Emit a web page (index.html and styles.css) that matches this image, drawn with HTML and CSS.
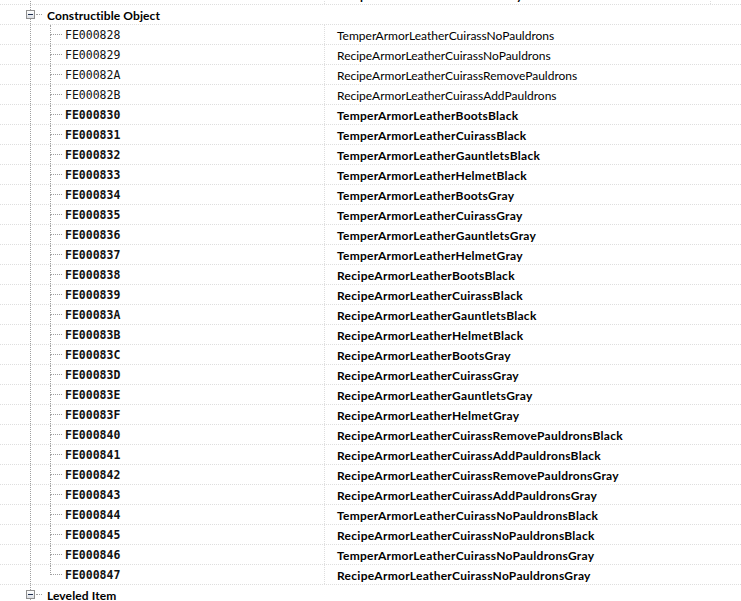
FILE: index.html
```html
<!DOCTYPE html>
<html lang="en">
<head>
    <meta charset="UTF-8">
    <meta name="viewport" content="width=device-width, initial-scale=1.0">
    <title>Records</title>
    <link rel="stylesheet" href="styles.css">
</head>
<body>

<div class="tree-view">

    <div class="row top">
        <div class="tree"><span class="guide"></span></div>
        <div class="edid wide bold">TemperArmorLeatherHelmetGray</div>
        <div class="extra"></div>
    </div>

    <div class="row group">
        <div class="node">
            <span class="expander"><i class="stem"></i><b class="box"></b><i class="stem"></i></span>
            <span class="hook"></span>
            <span class="label">Constructible Object</span>
        </div>
    </div>

    <div class="row">
        <div class="tree"><span class="guide"></span><span class="branch"><i class="up"></i><i class="down"></i></span><span class="formid">FE000828</span></div>
        <div class="edid">TemperArmorLeatherCuirassNoPauldrons</div>
    </div>
    <div class="row">
        <div class="tree"><span class="guide"></span><span class="branch"><i class="up"></i><i class="down"></i></span><span class="formid">FE000829</span></div>
        <div class="edid">RecipeArmorLeatherCuirassNoPauldrons</div>
    </div>
    <div class="row">
        <div class="tree"><span class="guide"></span><span class="branch"><i class="up"></i><i class="down"></i></span><span class="formid">FE00082A</span></div>
        <div class="edid">RecipeArmorLeatherCuirassRemovePauldrons</div>
    </div>
    <div class="row">
        <div class="tree"><span class="guide"></span><span class="branch"><i class="up"></i><i class="down"></i></span><span class="formid">FE00082B</span></div>
        <div class="edid">RecipeArmorLeatherCuirassAddPauldrons</div>
    </div>
    <div class="row bold">
        <div class="tree"><span class="guide"></span><span class="branch"><i class="up"></i><i class="down"></i></span><span class="formid">FE000830</span></div>
        <div class="edid">TemperArmorLeatherBootsBlack</div>
    </div>
    <div class="row bold">
        <div class="tree"><span class="guide"></span><span class="branch"><i class="up"></i><i class="down"></i></span><span class="formid">FE000831</span></div>
        <div class="edid">TemperArmorLeatherCuirassBlack</div>
    </div>
    <div class="row bold">
        <div class="tree"><span class="guide"></span><span class="branch"><i class="up"></i><i class="down"></i></span><span class="formid">FE000832</span></div>
        <div class="edid">TemperArmorLeatherGauntletsBlack</div>
    </div>
    <div class="row bold">
        <div class="tree"><span class="guide"></span><span class="branch"><i class="up"></i><i class="down"></i></span><span class="formid">FE000833</span></div>
        <div class="edid">TemperArmorLeatherHelmetBlack</div>
    </div>
    <div class="row bold">
        <div class="tree"><span class="guide"></span><span class="branch"><i class="up"></i><i class="down"></i></span><span class="formid">FE000834</span></div>
        <div class="edid">TemperArmorLeatherBootsGray</div>
    </div>
    <div class="row bold">
        <div class="tree"><span class="guide"></span><span class="branch"><i class="up"></i><i class="down"></i></span><span class="formid">FE000835</span></div>
        <div class="edid">TemperArmorLeatherCuirassGray</div>
    </div>
    <div class="row bold">
        <div class="tree"><span class="guide"></span><span class="branch"><i class="up"></i><i class="down"></i></span><span class="formid">FE000836</span></div>
        <div class="edid">TemperArmorLeatherGauntletsGray</div>
    </div>
    <div class="row bold">
        <div class="tree"><span class="guide"></span><span class="branch"><i class="up"></i><i class="down"></i></span><span class="formid">FE000837</span></div>
        <div class="edid">TemperArmorLeatherHelmetGray</div>
    </div>
    <div class="row bold">
        <div class="tree"><span class="guide"></span><span class="branch"><i class="up"></i><i class="down"></i></span><span class="formid">FE000838</span></div>
        <div class="edid">RecipeArmorLeatherBootsBlack</div>
    </div>
    <div class="row bold">
        <div class="tree"><span class="guide"></span><span class="branch"><i class="up"></i><i class="down"></i></span><span class="formid">FE000839</span></div>
        <div class="edid">RecipeArmorLeatherCuirassBlack</div>
    </div>
    <div class="row bold">
        <div class="tree"><span class="guide"></span><span class="branch"><i class="up"></i><i class="down"></i></span><span class="formid">FE00083A</span></div>
        <div class="edid">RecipeArmorLeatherGauntletsBlack</div>
    </div>
    <div class="row bold">
        <div class="tree"><span class="guide"></span><span class="branch"><i class="up"></i><i class="down"></i></span><span class="formid">FE00083B</span></div>
        <div class="edid">RecipeArmorLeatherHelmetBlack</div>
    </div>
    <div class="row bold">
        <div class="tree"><span class="guide"></span><span class="branch"><i class="up"></i><i class="down"></i></span><span class="formid">FE00083C</span></div>
        <div class="edid">RecipeArmorLeatherBootsGray</div>
    </div>
    <div class="row bold">
        <div class="tree"><span class="guide"></span><span class="branch"><i class="up"></i><i class="down"></i></span><span class="formid">FE00083D</span></div>
        <div class="edid">RecipeArmorLeatherCuirassGray</div>
    </div>
    <div class="row bold">
        <div class="tree"><span class="guide"></span><span class="branch"><i class="up"></i><i class="down"></i></span><span class="formid">FE00083E</span></div>
        <div class="edid">RecipeArmorLeatherGauntletsGray</div>
    </div>
    <div class="row bold">
        <div class="tree"><span class="guide"></span><span class="branch"><i class="up"></i><i class="down"></i></span><span class="formid">FE00083F</span></div>
        <div class="edid">RecipeArmorLeatherHelmetGray</div>
    </div>
    <div class="row bold">
        <div class="tree"><span class="guide"></span><span class="branch"><i class="up"></i><i class="down"></i></span><span class="formid">FE000840</span></div>
        <div class="edid">RecipeArmorLeatherCuirassRemovePauldronsBlack</div>
    </div>
    <div class="row bold">
        <div class="tree"><span class="guide"></span><span class="branch"><i class="up"></i><i class="down"></i></span><span class="formid">FE000841</span></div>
        <div class="edid">RecipeArmorLeatherCuirassAddPauldronsBlack</div>
    </div>
    <div class="row bold">
        <div class="tree"><span class="guide"></span><span class="branch"><i class="up"></i><i class="down"></i></span><span class="formid">FE000842</span></div>
        <div class="edid">RecipeArmorLeatherCuirassRemovePauldronsGray</div>
    </div>
    <div class="row bold">
        <div class="tree"><span class="guide"></span><span class="branch"><i class="up"></i><i class="down"></i></span><span class="formid">FE000843</span></div>
        <div class="edid">RecipeArmorLeatherCuirassAddPauldronsGray</div>
    </div>
    <div class="row bold">
        <div class="tree"><span class="guide"></span><span class="branch"><i class="up"></i><i class="down"></i></span><span class="formid">FE000844</span></div>
        <div class="edid">TemperArmorLeatherCuirassNoPauldronsBlack</div>
    </div>
    <div class="row bold">
        <div class="tree"><span class="guide"></span><span class="branch"><i class="up"></i><i class="down"></i></span><span class="formid">FE000845</span></div>
        <div class="edid">RecipeArmorLeatherCuirassNoPauldronsBlack</div>
    </div>
    <div class="row bold">
        <div class="tree"><span class="guide"></span><span class="branch"><i class="up"></i><i class="down"></i></span><span class="formid">FE000846</span></div>
        <div class="edid">TemperArmorLeatherCuirassNoPauldronsGray</div>
    </div>
    <div class="row bold last">
        <div class="tree"><span class="guide"></span><span class="branch"><i class="up"></i><i class="down"></i></span><span class="formid">FE000847</span></div>
        <div class="edid">RecipeArmorLeatherCuirassNoPauldronsGray</div>
    </div>

    <div class="row group">
        <div class="node">
            <span class="expander"><i class="stem"></i><b class="box"></b><i class="stem"></i></span>
            <span class="hook"></span>
            <span class="label">Leveled Item</span>
        </div>
    </div>

</div>

</body>
</html>
```

FILE: styles.css
```css
body { margin: 0; background: #fff; color: #000; font-family: Lato, "Noto Sans", sans-serif; font-size: 12px; overflow: hidden; }

.tree-view { margin-top: -15px; }

.row { display: flex; height: 20px; box-sizing: border-box; border-bottom: 1px dotted #dedede; line-height: 21px; white-space: nowrap; }
.row.bold { font-weight: bold; }
.row.bold .edid, .edid.bold { font-weight: bold; letter-spacing: 0.27px; }

/* left column: tree lines + form id */
.tree { display: flex; flex: none; width: 324px; padding-left: 30px; box-sizing: border-box; }
.guide { flex: none; width: 20px; box-sizing: border-box; border-left: 1px dotted #a0a0a0; }
.branch { flex: none; width: 12px; display: flex; flex-direction: column; }
.branch .up { height: 10px; box-sizing: border-box; border-left: 1px dotted #a0a0a0; border-bottom: 1px dotted #a0a0a0; }
.branch .down { flex: 1; border-left: 1px dotted #a0a0a0; }
.row.last .branch .down { border-left: none; }
.formid { margin-left: 3px; font-family: "DejaVu Sans Mono", monospace; font-size: 11.5px; color: #111; }

/* right column: editor id */
.edid { padding-left: 12px; border-left: 1px dotted #dedede; }
.edid.wide { width: 386px; box-sizing: border-box; }
.extra { flex: 1; border-left: 1px dotted #dedede; }

/* group nodes */
.node { display: flex; padding-left: 26px; }
.expander { flex: none; width: 9px; display: flex; flex-direction: column; align-items: center; }
.stem { flex: 1; width: 0; border-left: 1px dotted #a0a0a0; }
.box { flex: none; width: 9px; height: 9px; box-sizing: border-box; border: 1px solid #8f8f8f; background: linear-gradient(#ffffff, #dcdfe4); display: flex; align-items: center; justify-content: center; }
.box::before { content: ""; width: 5px; height: 1px; background: #1f3050; }
.hook { flex: none; width: 6px; height: 10px; margin-left: 1px; box-sizing: border-box; border-bottom: 1px dotted #a0a0a0; }
.label { margin-left: 5px; font-weight: bold; letter-spacing: 0.1px; }
```
